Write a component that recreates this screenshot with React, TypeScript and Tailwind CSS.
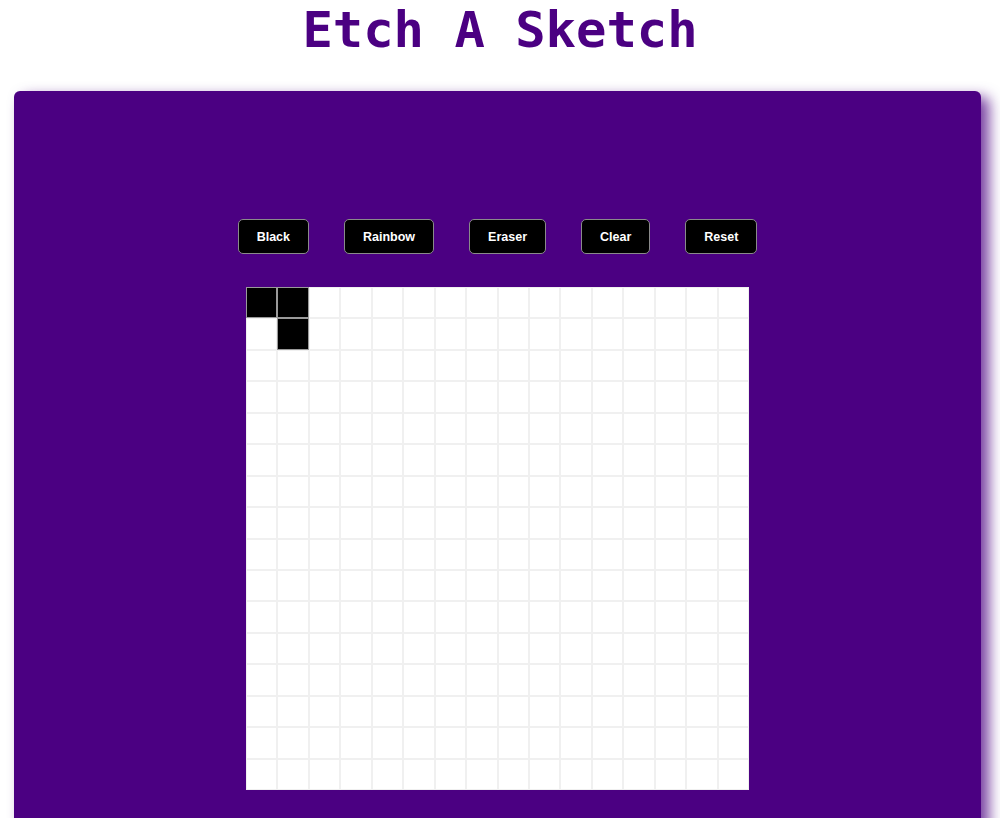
import { useState } from "react";

const SIZE = 16;
const buttons = ["Black", "Rainbow", "Eraser", "Clear", "Reset"];

export default function App() {
  const [cells, setCells] = useState<string[]>(() => {
    const arr = Array(SIZE * SIZE).fill("");
    arr[0] = "black";
    arr[1] = "black";
    arr[SIZE + 1] = "black";
    return arr;
  });

  const paint = (i: number) => {
    setCells((prev) => prev.map((c, idx) => (idx === i ? "black" : c)));
  };

  return (
    <div className="min-h-[818px] w-full overflow-hidden bg-white">
      <h1 className="pt-[1px] text-center font-['DejaVu_Sans_Mono',monospace] text-[50.5px] font-bold leading-[58px] text-[#4b0082]">
        Etch A Sketch
      </h1>
      <div className="mx-[14px] mr-[19px] mt-[32px] min-h-[760px] rounded-[6px] bg-[#4b0082] pt-[128px] pb-10 shadow-[8px_6px_14px_rgba(75,0,130,0.75)]">
        <div className="flex justify-center gap-[35px]">
          {buttons.map((b) => (
            <button
              key={b}
              className="h-[35px] rounded-[5px] border border-[#8a8a8a] bg-black px-[18px] pt-[2px] font-['Liberation_Sans',Arial,sans-serif] text-[12.5px] font-bold text-white"
            >
              {b}
            </button>
          ))}
        </div>
        <div className="mt-[33px] flex justify-center">
          <div className="grid h-[503px] w-[503px] grid-cols-16 bg-white">
            {cells.map((c, i) => (
              <div
                key={i}
                onMouseEnter={() => paint(i)}
                className={
                  c === "black"
                    ? "border border-[#9a9a9a] bg-black"
                    : "border border-[#f0f0f0] bg-white"
                }
              />
            ))}
          </div>
        </div>
      </div>
    </div>
  );
}
